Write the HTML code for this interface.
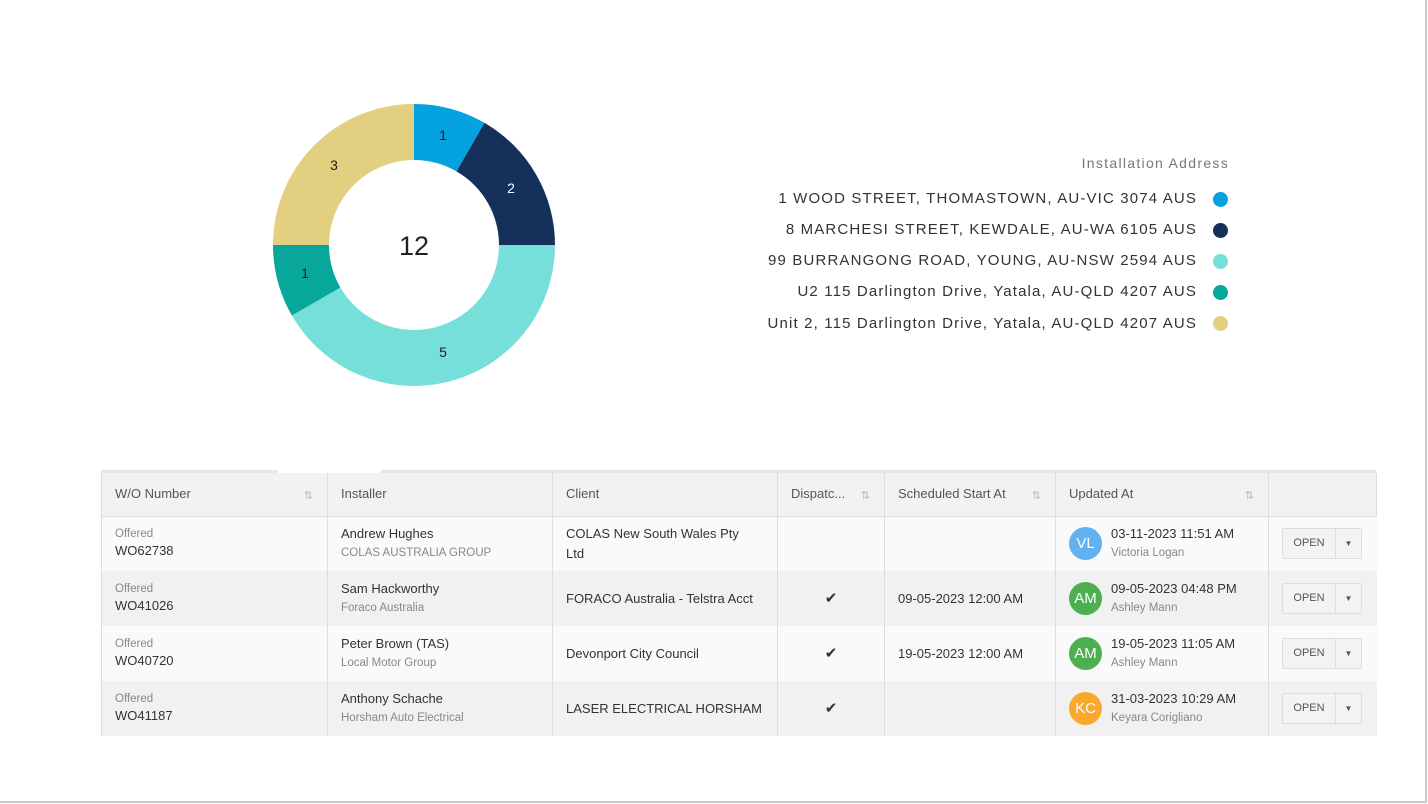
<!DOCTYPE html>
<html><head><style>
*{margin:0;padding:0;box-sizing:border-box}
body{width:1428px;height:804px;background:#fff;position:relative;overflow:hidden;font-family:"Liberation Sans",Arial,sans-serif;color:#333}
.frame{position:absolute;left:0;top:0;width:1427px;height:803px;border-right:2px solid #c8c8c8;border-bottom:2px solid #c8c8c8}
.legend{position:absolute;right:199px;text-align:right;font-size:15px;color:#333;white-space:nowrap;letter-spacing:1.15px}
.dot{position:absolute;left:1213px;width:15px;height:15px;border-radius:50%}
table{position:absolute;left:101px;top:473px;border-collapse:collapse;font-size:13px;table-layout:fixed;line-height:18px}
.topbar{position:absolute;left:101px;top:470px;width:1275px;height:4px;background:#e6e6e6}
.topbar i{position:absolute;left:177px;width:103px;top:0;height:3px;background:#fff}
td,th{border-left:1px solid #ddd;padding:0 13px;vertical-align:middle;text-align:left}
th{height:43px;background:#f2f2f2;font-weight:normal;color:#555;border-bottom:1px solid #ddd;font-size:13px;position:relative}
th .s{position:absolute;right:14px;top:14px;color:#bbb;font-size:11px}
tr.a td{background:#fafafa}
tr.b td{background:#f1f1f1}
td{height:55px;color:#333}
.sm{font-size:11.5px;color:#888;margin-top:1px}
.st{font-size:11.5px;color:#888;line-height:15px}
.av{display:inline-block;width:33px;height:33px;border-radius:50%;color:#fff;font-size:15px;text-align:center;line-height:33px;vertical-align:middle;margin-right:9px}
.upd{display:flex;align-items:center}
.btn{display:flex;width:80px;height:31px;border:1px solid #ddd;border-radius:2px;background:#f3f3f3;font-size:11px;color:#555}
.btn span{flex:0 0 53px;text-align:center;line-height:29px;border-right:1px solid #ddd}
.btn b{flex:1;text-align:center;font-size:8px;line-height:29px;font-weight:normal}
.ck{text-align:center;font-size:15px}
</style></head><body>
<div class="frame"></div>
<svg width="1428" height="420" style="position:absolute;left:0;top:0">
<path d="M414 104 A141 141 0 0 1 484.5 122.9 L456.5 171.4 A85 85 0 0 0 414 160Z" fill="#05a2e0"/>
<path d="M484.5 122.9 A141 141 0 0 1 555 245 L499 245 A85 85 0 0 0 456.5 171.4Z" fill="#15305a"/>
<path d="M555 245 A141 141 0 0 1 291.9 315.5 L340.4 287.5 A85 85 0 0 0 499 245Z" fill="#76dfd9"/>
<path d="M291.9 315.5 A141 141 0 0 1 273 245 L329 245 A85 85 0 0 0 340.4 287.5Z" fill="#08a79c"/>
<path d="M273 245 A141 141 0 0 1 414 104 L414 160 A85 85 0 0 0 329 245Z" fill="#e2cf80"/>
<g font-family="Liberation Sans,Arial,sans-serif" font-size="14" text-anchor="middle">
<text x="443" y="140" fill="#222">1</text>
<text x="511" y="193" fill="#fff">2</text>
<text x="443" y="357" fill="#222">5</text>
<text x="305" y="278" fill="#222">1</text>
<text x="334" y="170" fill="#222">3</text>
<text x="414" y="255" font-size="27" fill="#222">12</text>
</g>
</svg>
<div class="legend" style="top:155px;color:#777;font-size:14px;letter-spacing:1.3px">Installation Address</div>
<div class="legend" style="top:190px;right:231px">1 WOOD STREET, THOMASTOWN, AU-VIC 3074 AUS</div>
<div class="legend" style="top:221px;right:231px">8 MARCHESI STREET, KEWDALE, AU-WA 6105 AUS</div>
<div class="legend" style="top:252px;right:231px">99 BURRANGONG ROAD, YOUNG, AU-NSW 2594 AUS</div>
<div class="legend" style="top:283px;right:231px">U2 115 Darlington Drive, Yatala, AU-QLD 4207 AUS</div>
<div class="legend" style="top:315px;right:231px">Unit 2, 115 Darlington Drive, Yatala, AU-QLD 4207 AUS</div>
<div class="dot" style="top:192px;background:#05a2e0"></div>
<div class="dot" style="top:223px;background:#15305a"></div>
<div class="dot" style="top:254px;background:#76dfd9"></div>
<div class="dot" style="top:285px;background:#08a79c"></div>
<div class="dot" style="top:316px;background:#e2cf80"></div>
<div class="topbar"><i></i></div>
<table>
<colgroup><col style="width:226px"><col style="width:225px"><col style="width:225px"><col style="width:107px"><col style="width:171px"><col style="width:213px"><col style="width:108px"></colgroup>
<tr><th>W/O Number<span class="s">⇅</span></th><th>Installer</th><th>Client</th><th>Dispatc...<span class="s">⇅</span></th><th>Scheduled Start At<span class="s">⇅</span></th><th>Updated At<span class="s">⇅</span></th><th style="border-right:1px solid #ddd"></th></tr>
<tr class="a"><td><div class="st">Offered</div>WO62738</td><td>Andrew Hughes<div class="sm">COLAS AUSTRALIA GROUP</div></td><td style="line-height:20px">COLAS New South Wales Pty<br>Ltd</td><td></td><td></td><td><div class="upd"><span class="av" style="background:#64b1f0">VL</span><div>03-11-2023 11:51 AM<div class="sm">Victoria Logan</div></div></div></td><td><div class="btn"><span>OPEN</span><b>▼</b></div></td></tr>
<tr class="b"><td><div class="st">Offered</div>WO41026</td><td>Sam Hackworthy<div class="sm">Foraco Australia</div></td><td>FORACO Australia - Telstra Acct</td><td class="ck">✔</td><td>09-05-2023 12:00 AM</td><td><div class="upd"><span class="av" style="background:#4cb050">AM</span><div>09-05-2023 04:48 PM<div class="sm">Ashley Mann</div></div></div></td><td><div class="btn"><span>OPEN</span><b>▼</b></div></td></tr>
<tr class="a"><td><div class="st">Offered</div>WO40720</td><td>Peter Brown (TAS)<div class="sm">Local Motor Group</div></td><td>Devonport City Council</td><td class="ck">✔</td><td>19-05-2023 12:00 AM</td><td><div class="upd"><span class="av" style="background:#4cb050">AM</span><div>19-05-2023 11:05 AM<div class="sm">Ashley Mann</div></div></div></td><td><div class="btn"><span>OPEN</span><b>▼</b></div></td></tr>
<tr class="b"><td><div class="st">Offered</div>WO41187</td><td>Anthony Schache<div class="sm">Horsham Auto Electrical</div></td><td>LASER ELECTRICAL HORSHAM</td><td class="ck">✔</td><td></td><td><div class="upd"><span class="av" style="background:#f9a82e">KC</span><div>31-03-2023 10:29 AM<div class="sm">Keyara Corigliano</div></div></div></td><td><div class="btn"><span>OPEN</span><b>▼</b></div></td></tr>
</table>
</body></html>
